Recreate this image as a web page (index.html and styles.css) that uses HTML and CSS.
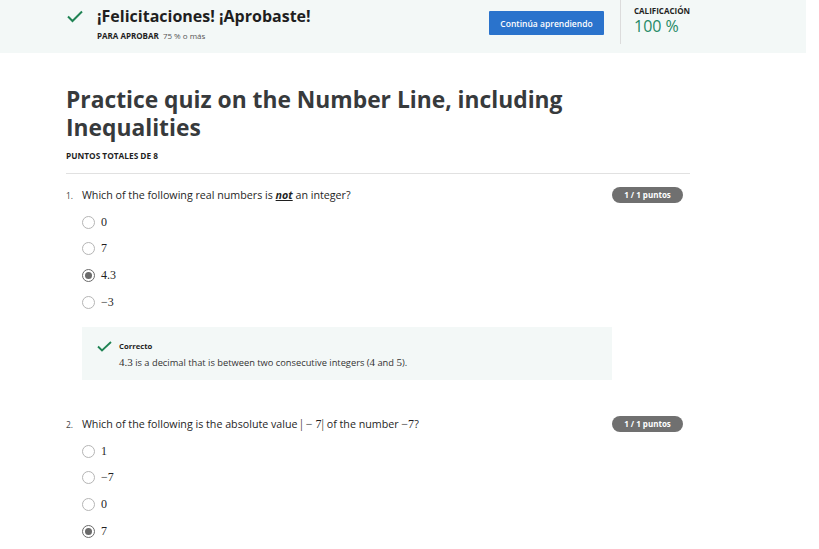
FILE: index.html
```html
<!DOCTYPE html>
<html lang="es">
<head>
<meta charset="utf-8">
<title>Practice quiz</title>
<link rel="stylesheet" href="styles.css">
</head>
<body>
<header class="banner">
  <div class="banner-main">
    <svg class="banner-check" width="16" height="13" viewBox="0 0 16 13"><path d="M1 6.5 L5.5 11 L15 1.5" fill="none" stroke="#1f8354" stroke-width="2"/></svg>
    <div class="banner-text">
      <h1 class="banner-title">¡Felicitaciones! ¡Aprobaste!</h1>
      <p class="banner-sub"><strong>PARA APROBAR</strong> <span>75 % o más</span></p>
    </div>
  </div>
  <button class="btn-continue">Continúa aprendiendo</button>
  <div class="grade">
    <div class="grade-label">CALIFICACIÓN</div>
    <div class="grade-value">100 %</div>
  </div>
</header>

<main class="content">
  <h2 class="quiz-title">Practice quiz on the Number Line, including Inequalities</h2>
  <p class="total">PUNTOS TOTALES DE 8</p>
  <hr class="rule">

  <section class="question">
    <div class="q-head">
      <span class="q-num">1.</span>
      <p class="q-text">Which of the following real numbers is <em class="not">not</em> an integer?</p>
      <span class="badge">1 / 1 puntos</span>
    </div>
    <ul class="options">
      <li class="option"><span class="radio"></span><span class="math">0</span></li>
      <li class="option"><span class="radio"></span><span class="math">7</span></li>
      <li class="option"><span class="radio checked"></span><span class="math">4.3</span></li>
      <li class="option"><span class="radio"></span><span class="math">−3</span></li>
    </ul>
    <div class="feedback">
      <svg class="fb-check" width="15" height="11" viewBox="0 0 15 11"><path d="M1 5.5 L5 9.5 L14 1" fill="none" stroke="#1f8354" stroke-width="1.8"/></svg>
      <div class="fb-body">
        <div class="fb-title">Correcto</div>
        <p class="fb-text"><span class="math">4.3</span> is a decimal that is between two consecutive integers (<span class="math">4</span> and <span class="math">5</span>).</p>
      </div>
    </div>
  </section>

  <section class="question q2">
    <div class="q-head">
      <span class="q-num">2.</span>
      <p class="q-text">Which of the following is the absolute value <span class="math abs">|<span class="op">−</span>7|</span> of the number <span class="math">−7</span>?</p>
      <span class="badge">1 / 1 puntos</span>
    </div>
    <ul class="options">
      <li class="option"><span class="radio"></span><span class="math">1</span></li>
      <li class="option"><span class="radio"></span><span class="math">−7</span></li>
      <li class="option"><span class="radio"></span><span class="math">0</span></li>
      <li class="option"><span class="radio checked"></span><span class="math">7</span></li>
    </ul>
  </section>
</main>
</body>
</html>
```
FILE: styles.css
```css
* { box-sizing: border-box; }
body {
  margin: 0;
  font-family: "Open Sans", "Liberation Sans", sans-serif;
  color: #1f1f1f;
  background: #fff;
}
p, h1, h2, ul { margin: 0; padding: 0; }

.banner {
  width: 806px;
  height: 53px;
  background: #f3f8f7;
  display: flex;
  align-items: flex-start;
}
.banner-main {
  display: flex;
  align-items: flex-start;
  padding: 10px 0 0 67px;
  gap: 14px;
  width: 489px;
}
.banner-check { flex: none; }
.banner-text { margin-top: -5px; }
.banner-title {
  font-size: 16px;
  line-height: 22px;
  font-weight: 700;
  color: #1f1f1f;
}
.banner-sub {
  font-size: 8px;
  line-height: 10px;
  margin-top: 4px;
  color: #1f1f1f;
}
.banner-sub strong { font-weight: 700; margin-right: 2px; }
.banner-sub span { color: #555; font-size: 8px; }

.btn-continue {
  margin-top: 11px;
  width: 115px;
  height: 24px;
  border: 0;
  border-radius: 1px;
  background: #2a73cc;
  color: #fff;
  font-family: "Open Sans", sans-serif;
  font-size: 8.5px;
  font-weight: 600;
  padding: 0;
}
.grade {
  margin-left: 16px;
  height: 44px;
  border-left: 1px solid #dcdcdc;
  padding: 6px 0 0 13px;
}
.grade-label {
  font-size: 8px;
  line-height: 9px;
  font-weight: 700;
  color: #1f1f1f;
}
.grade-value {
  margin-top: 3px;
  font-size: 16px;
  line-height: 16px;
  color: #1f8a66;
}

.content {
  width: 624px;
  margin-left: 66px;
  padding-top: 33px;
}
.quiz-title {
  font-size: 22.8px;
  line-height: 28px;
  font-weight: 700;
  color: #373a3c;
}
.total {
  font-size: 8.3px;
  line-height: 10px;
  font-weight: 700;
  margin-top: 9px;
  color: #1f1f1f;
}
.rule {
  border: 0;
  border-top: 1px solid #e1e1e1;
  margin: 12px 0 0 0;
}

.question { margin-top: 13px; }
.q2 { margin-top: 36px; }
.q-head {
  display: flex;
  align-items: center;
  height: 16px;
}
.q-num {
  width: 16px;
  font-size: 8.5px;
  color: #444;
}
.q-text {
  flex: 1;
  font-size: 10.7px;
  color: #1f1f1f;
}
.not { font-weight: 700; font-style: italic; text-decoration: underline; }
.badge {
  width: 71px;
  height: 16px;
  border-radius: 8px;
  background: #707070;
  color: #fff;
  font-size: 8px;
  font-weight: 700;
  line-height: 16px;
  text-align: center;
  margin-right: 7px;
}
.math {
  font-family: "Liberation Serif", "DejaVu Serif", serif;
  font-size: 12px;
}
.abs .op { margin: 0 3px; }

.options {
  list-style: none;
  margin: 12px 0 0 16px;
  display: flex;
  flex-direction: column;
  gap: 12.7px;
}
.option {
  display: flex;
  align-items: center;
  height: 14px;
  gap: 6px;
}
.radio {
  width: 13px;
  height: 13px;
  border-radius: 50%;
  border: 1px solid #b5b5b5;
  display: flex;
  align-items: center;
  justify-content: center;
  background: #fff;
}
.radio.checked { border-color: #6a6a6a; }
.radio.checked::after {
  content: "";
  width: 7px;
  height: 7px;
  border-radius: 50%;
  background: #6a6a6a;
}

.feedback {
  margin: 18px 0 0 16px;
  width: 530px;
  height: 53px;
  background: #f3f8f7;
  display: flex;
  align-items: flex-start;
  padding: 14px 0 0 15px;
  gap: 7px;
}
.fb-check { flex: none; }
.fb-title {
  font-size: 7.7px;
  font-weight: 700;
  line-height: 10px;
}
.fb-text {
  font-size: 9.3px;
  line-height: 12px;
  margin-top: 5px;
  color: #333;
}
.fb-text .math { font-size: 11px; }
```
